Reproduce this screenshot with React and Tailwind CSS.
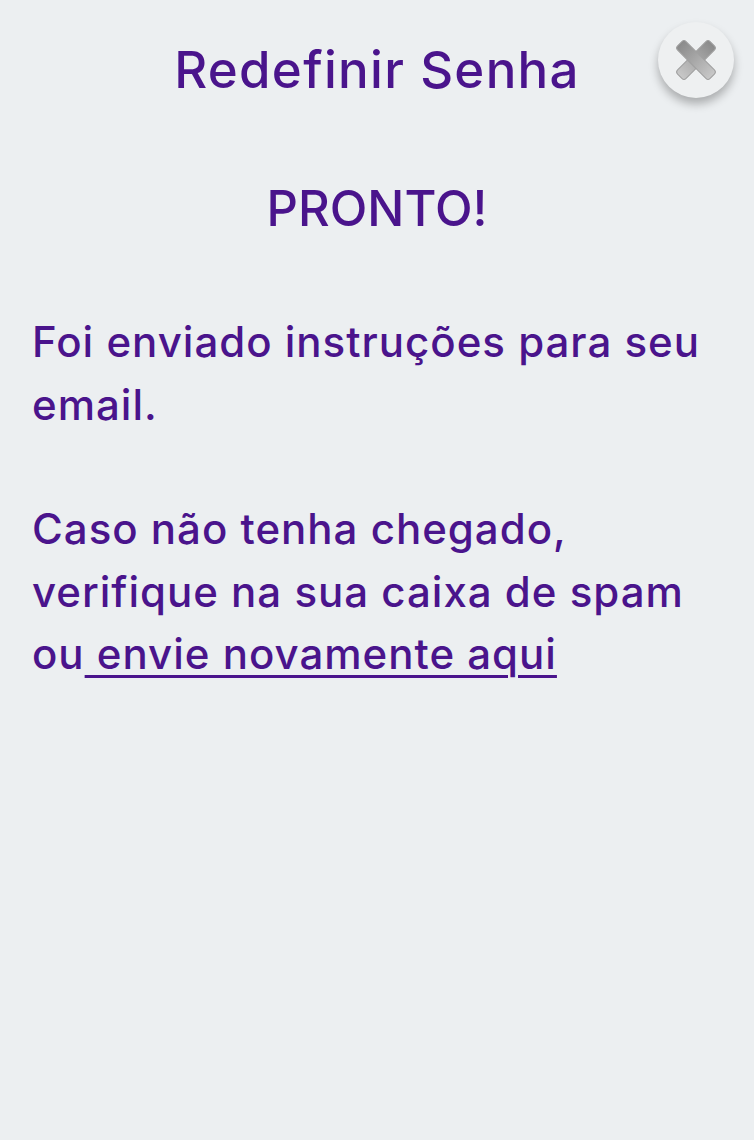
export default function App(){
  return (
    <div className="min-h-[1140px] w-full bg-[#eceff1] text-[#4a148c] relative" style={{fontFamily:'Inter, "Noto Sans", sans-serif'}}>
      <button className="absolute right-[20px] top-[22px] w-[76px] h-[76px] rounded-full bg-[#eef0f1] shadow-[0_6px_10px_rgba(0,0,0,0.28)] flex items-center justify-center">
        <CloseIcon />
      </button>

      <h1 className="pt-[38px] text-center text-[51px] leading-[64px] font-medium tracking-[1.3px]">Redefinir Senha</h1>

      <h2 className="mt-[75px] text-center text-[49px] leading-[64px] font-medium">PRONTO!</h2>

      <div className="mt-[70px] px-[32px] text-[42px] leading-[62.5px] font-medium tracking-[1px]">
        <p>Foi enviado instruções para seu email.</p>
        <p className="mt-[62px]">
          Caso não tenha chegado, verifique na sua caixa de spam ou<a href="#" className="underline underline-offset-[6px] decoration-[3px]"> envie novamente aqui</a>
        </p>
      </div>
    </div>
  )
}

function CloseIcon(){
  return (
    <svg width="46" height="46" viewBox="0 0 46 46">
      <defs>
        <linearGradient id="xg" x1="0" y1="0" x2="0" y2="1">
          <stop offset="0" stopColor="#8a8a8a" />
          <stop offset="1" stopColor="#c8c8c8" />
        </linearGradient>
      </defs>
      <g fill="url(#xg)" stroke="#a0a0a0" strokeWidth="1">
        <rect x="17" y="0" width="12" height="46" rx="3" transform="rotate(45 23 23)" />
        <rect x="17" y="0" width="12" height="46" rx="3" transform="rotate(-45 23 23)" />
      </g>
    </svg>
  )
}
